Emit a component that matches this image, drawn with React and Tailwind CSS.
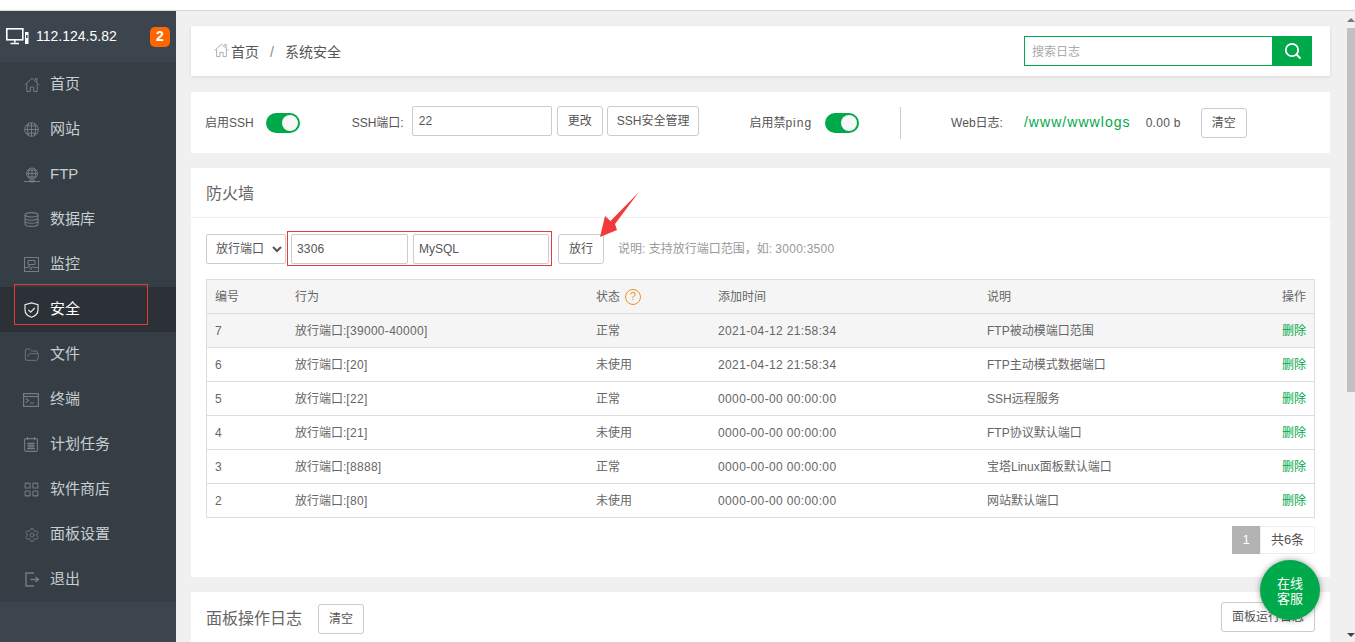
import { FolderOpen, LayoutGrid, Settings } from "lucide-react";

const font = { fontFamily: '"Liberation Sans", "Noto Sans CJK SC", sans-serif' };

const menu = [
  { name: "首页", icon: <HomeIcon size={16} /> },
  { name: "网站", icon: <GlobeIcon /> },
  { name: "FTP", icon: <FtpIcon /> },
  { name: "数据库", icon: <DbIcon /> },
  { name: "监控", icon: <MonitorIcon /> },
  { name: "安全", icon: <ShieldIcon />, active: true },
  { name: "文件", icon: <FolderOpen size={16} strokeWidth={1.3} /> },
  { name: "终端", icon: <TermIcon /> },
  { name: "计划任务", icon: <CalIcon /> },
  { name: "软件商店", icon: <LayoutGrid size={17} strokeWidth={1.5} className="-ml-[1px]" /> },
  { name: "面板设置", icon: <Settings size={16} strokeWidth={1.3} /> },
  { name: "退出", icon: <ExitIcon /> },
];

const rows = [
  { id: 7, port: "[39000-40000]", status: "正常", time: "2021-04-12 21:58:34", note: "FTP被动模端口范围", hover: true },
  { id: 6, port: "[20]", status: "未使用", time: "2021-04-12 21:58:34", note: "FTP主动模式数据端口" },
  { id: 5, port: "[22]", status: "正常", time: "0000-00-00 00:00:00", note: "SSH远程服务" },
  { id: 4, port: "[21]", status: "未使用", time: "0000-00-00 00:00:00", note: "FTP协议默认端口" },
  { id: 3, port: "[8888]", status: "正常", time: "0000-00-00 00:00:00", note: "宝塔Linux面板默认端口" },
  { id: 2, port: "[80]", status: "未使用", time: "0000-00-00 00:00:00", note: "网站默认端口" },
];

function HomeIcon({ size }) {
  return (
    <svg width={size} height={size} viewBox="0 0 16 16" fill="none" stroke="currentColor" strokeWidth="1">
      <path d="M0.7 8 8 1.2 15.3 8M2.8 6.5V14.5H6.3V10H9.7V14.5H13.2V6.5M11.5 3V1.5H13V5" />
    </svg>
  );
}

function GlobeIcon() {
  return (
    <svg width="15" height="15" viewBox="0 0 15 15" fill="none" stroke="currentColor" strokeWidth="1">
      <circle cx="7.5" cy="7.5" r="6.8" />
      <path d="M0.7 7.5h13.6M7.5 0.7v13.6M2 3.8h11M2 11.2h11M4.8 1.3c-1.8 4-1.8 8.400 0 12.400M10.200 1.300c1.800 4 1.800 8.400 0 12.400" />
    </svg>
  );
}

function FtpIcon() {
  return (
    <svg width="16" height="16" viewBox="0 0 16 16" fill="none" stroke="currentColor" strokeWidth="1">
      <circle cx="8" cy="6.5" r="5.5" />
      <path d="M2.500 6.500h11M8 1v11M4 3.200h8M4 9.800h8M5.500 2c-1.500 3-1.500 6 0 9M10.500 2c1.500 3 1.500 6 0 9M0 14.500h16M6 13h4v2H6z" />
    </svg>
  );
}

function DbIcon() {
  return (
    <svg width="15" height="15" viewBox="0 0 15 15" fill="none" stroke="currentColor" strokeWidth="1.1">
      <ellipse cx="7.500" cy="2.800" rx="6.500" ry="2.200" />
      <path d="M1 2.800v9.400c0 1.200 2.900 2.200 6.500 2.200s6.500-1 6.500-2.200V2.800M1 6c0 1.200 2.900 2.200 6.500 2.200S14 7.200 14 6M1 9.100c0 1.200 2.900 2.200 6.500 2.200s6.500-1 6.500-2.200" />
    </svg>
  );
}

function MonitorIcon() {
  return (
    <svg width="15" height="15" viewBox="0 0 15 15" fill="none" stroke="currentColor" strokeWidth="1">
      <rect x="0.500" y="0.500" width="14" height="14" />
      <path d="M4 3.500h7v4H4zM1 10.500h3l1.200-2 1.600 4 1.500-3 1 1h5" />
    </svg>
  );
}

function ShieldIcon() {
  return (
    <svg width="15" height="16" viewBox="0 0 15 16" fill="none" stroke="currentColor" strokeWidth="1.200">
      <path d="M7.500 0.800 14 2.600V8c0 3.500-2.800 6-6.500 7.300C3.800 14 1 11.500 1 8V2.600Z" />
      <path d="M4.300 7.800l2.400 2.400 4-4.200" />
    </svg>
  );
}

function TermIcon() {
  return (
    <svg width="16" height="14" viewBox="0 0 16 14" fill="none" stroke="currentColor" strokeWidth="1.200" className="-ml-[1px]">
      <rect x="0.600" y="0.600" width="14.800" height="12.800" />
      <path d="M1 3.500h14" />
      <path d="M3 5.500l2.500 2L3 9.500M7 10h4" />
    </svg>
  );
}

function CalIcon() {
  return (
    <svg width="14" height="15" viewBox="0 0 14 15" fill="none" stroke="currentColor" strokeWidth="1.100">
      <rect x="0.600" y="1.600" width="12.800" height="12.800" rx="1.500" />
      <path d="M3.500 0v3M10.500 0v3M3 6.500h8M3 9h8M3 11.500h8M5 5.500v7M7 5.500v7M9 5.500v7" />
    </svg>
  );
}

function ExitIcon() {
  return (
    <svg width="15" height="15" viewBox="0 0 15 15" fill="none" stroke="currentColor" strokeWidth="1.400" className="ml-[1px]">
      <path d="M9 1H1v13h8M5.500 7.500H12.500M10.500 5l3 2.500-3 2.500" />
    </svg>
  );
}

function SearchIcon() {
  return (
    <svg width="18" height="18" viewBox="0 0 18 18" fill="none" stroke="#fff" strokeWidth="1.800">
      <circle cx="8" cy="8" r="6.200" />
      <path d="M12.500 12.500 16.500 16.500" />
    </svg>
  );
}

function PcIcon() {
  return (
    <svg width="23" height="17" viewBox="0 0 23 17" fill="none">
      <rect x="0.800" y="0.800" width="16" height="11" stroke="#fff" strokeWidth="1.600" />
      <path d="M8.800 12v2.500M4.500 15.500h8.500" stroke="#fff" strokeWidth="1.600" />
      <rect x="19" y="4" width="3.500" height="12" fill="#fff" />
      <rect x="20" y="7" width="1.500" height="3" fill="#3c444d" />
    </svg>
  );
}

function Toggle() {
  return (
    <div className="flex h-[20px] w-[34px] items-center justify-end rounded-full bg-[#00a94a] pr-[2px]">
      <div className="h-[16px] w-[16px] rounded-full bg-[#f8f8f8]" />
    </div>
  );
}

function Btn({ children, className = "" }) {
  return (
    <button className={`h-[30px] shrink-0 rounded-[3px] border border-[#ccc] bg-white px-[10px] text-[12px] text-[#555] ${className}`}>
      {children}
    </button>
  );
}

export default function App() {
  return (
    <div style={font} className="relative flex h-[642px] w-[1355px] flex-col overflow-hidden bg-white">
      <div className="h-[11px] shrink-0 border-b border-[#d8d8d8] bg-white" />
      <div className="flex min-h-0 flex-1">
        {/* sidebar */}
        <aside className="flex w-[176px] shrink-0 flex-col bg-[#3c444d]">
          <div className="flex h-[51px] shrink-0 items-center px-[6px]">
            <PcIcon />
            <span className="ml-[7px] text-[14px] text-white">112.124.5.82</span>
            <span className="ml-auto flex h-[20px] w-[20px] items-center justify-center rounded-[5px] bg-[#ff6600] text-[14px] font-bold text-white">2</span>
          </div>
          <nav className="bg-[#353e45]">
            {menu.map((m) => (
              <div key={m.name} className={`relative flex h-[45px] items-center pl-[24px] ${m.active ? "bg-[#2c3138] text-white" : "text-[#c9cdd0]"}`}>
                <span className={`flex w-[26px] items-center ${m.active ? "text-[#e8e8e8]" : "text-[#767c82]"}`}>{m.icon}</span>
                <span className="text-[15px]">{m.name}</span>
                {m.active && <span className="absolute left-[14px] top-[-3px] h-[41px] w-[134px] border border-[#e33b3b]" />}
              </div>
            ))}
          </nav>
        </aside>

        {/* main */}
        <main className="flex min-w-0 flex-1 flex-col gap-[15px] overflow-hidden bg-[#f0f0f0] pl-[15px] pr-[17px] pt-[15px]">
          <section className="mb-[1px] flex h-[50px] shrink-0 items-center justify-between bg-white pl-[23px] pr-[18px] shadow-[0_1px_3px_rgba(0,0,0,0.1)]">
            <div className="flex items-center pt-[2px] text-[14px] text-[#555]">
              <span className="mb-[4px] text-[#aaa]"><HomeIcon size={15} /></span>
              <span className="ml-[2px]">首页</span>
              <span className="ml-[11px] mr-[11px] text-[#888]">/</span>
              <span>系统安全</span>
            </div>
            <div className="flex h-[30px] w-[288px]">
              <input readOnly placeholder="搜索日志" className="min-w-0 flex-1 border border-[#00a94a] px-[7px] pt-[2px] text-[12px] outline-none placeholder:text-[#aaa]" />
              <div className="flex w-[39px] items-center justify-center bg-[#00a94a]">
                <SearchIcon />
              </div>
            </div>
          </section>

          <section className="flex h-[61px] shrink-0 items-center bg-white pl-[14px] text-[12px] text-[#555]">
            <span>启用SSH</span>
            <span className="ml-[12px]"><Toggle /></span>
            <span className="ml-[52px]">SSH端口:</span>
            <input readOnly value="22" className="mb-[3px] ml-[8px] h-[30px] w-[140px] rounded-[2px] border border-[#ccc] px-[6px] text-[12px] text-[#555] outline-none" />
            <Btn className="mb-[3px] ml-[5px]">更改</Btn>
            <Btn className="mb-[3px] ml-[4px] !px-[9px]">SSH安全管理</Btn>
            <span className="ml-[50px]">启用禁<span className="tracking-[1px]">ping</span></span>
            <span className="ml-[13px]"><Toggle /></span>
            <span className="ml-[41px] h-[32px] w-px bg-[#ccc]" />
            <span className="ml-[50px]">Web日志:</span>
            <span className="ml-[21px] text-[14px] font-light tracking-[1.05px] text-[#00a94a]">/www/wwwlogs</span>
            <span className="ml-[15px] tracking-[0.3px]">0.00 b</span>
            <Btn className="ml-[20px]">清空</Btn>
          </section>

          <section className="flex h-[409px] shrink-0 flex-col bg-white">
            <div className="flex h-[50px] shrink-0 items-center border-b border-[#eee] px-[15px] pt-[3px] text-[16px] text-[#666]">防火墙</div>
            <div className="flex items-center px-[15px] pt-[13px] text-[12px] text-[#555]">
              <select className="h-[30px] w-[80px] rounded-[2px] border border-[#ccc] bg-white pl-[5px] text-[12px] text-[#555] outline-none">
                <option>放行端口</option>
              </select>
              <div className="ml-[1px] flex h-[35px] w-[265px] items-center gap-[5px] border border-[#e33b3b] pl-[3px]">
                <input readOnly value="3306" className="h-[30px] w-[117px] rounded-[2px] border border-[#ccc] px-[5px] text-[12px] tracking-[0.2px] text-[#555] outline-none" />
                <input readOnly value="MySQL" className="h-[30px] w-[136px] rounded-[2px] border border-[#ccc] px-[5px] text-[12px] text-[#555] outline-none" />
              </div>
              <Btn className="ml-[6px]">放行</Btn>
              <span className="ml-[14px] text-[#999]">说明: 支持放行端口范围，如: <span className="tracking-[0.25px]">3000:3500</span></span>
            </div>
            <div className="mx-[15px] mt-[13px] border border-[#ddd] text-[12px] text-[#666]">
              <div className="flex h-[33px] items-center bg-[#f5f5f5] px-[8px]">
                <span className="w-[80px]">编号</span>
                <span className="w-[301px]">行为</span>
                <span className="flex w-[122px] items-center gap-[5px]">
                  状态
                  <span className="flex h-[16px] w-[16px] items-center justify-center rounded-full border border-[#f0912c] text-[11px] text-[#f0912c]">?</span>
                </span>
                <span className="w-[269px]">添加时间</span>
                <span className="flex-1">说明</span>
                <span>操作</span>
              </div>
              {rows.map((r) => (
                <div key={r.id} className={`flex h-[34px] items-center border-t border-[#ddd] px-[8px] ${r.hover ? "bg-[#f5f5f5]" : ""}`}>
                  <span className="w-[80px]">{r.id}</span>
                  <span className="w-[301px]">放行端口:<span className="tracking-[0.3px]">{r.port}</span></span>
                  <span className="w-[122px]">{r.status}</span>
                  <span className="w-[269px] tracking-[0.37px]">{r.time}</span>
                  <span className="flex-1">{r.note}</span>
                  <span className="text-[#00a94a]">删除</span>
                </div>
              ))}
            </div>
            <div className="mx-[15px] mt-[8px] flex justify-end text-[13px]">
              <span className="flex h-[28px] w-[28px] items-center justify-center bg-[#b3b3b3] text-white">1</span>
              <span className="flex h-[28px] w-[55px] items-center justify-center border border-[#eee] text-[#555]">共6条</span>
            </div>
          </section>

          <section className="flex h-[60px] shrink-0 items-start justify-between bg-white px-[15px] pt-[10px]">
            <div className="mt-[2px] flex items-center text-[#666]">
              <span className="text-[16px]">面板操作日志</span>
              <Btn className="ml-[16px]">清空</Btn>
            </div>
            <Btn>面板运行日志</Btn>
          </section>
        </main>

        {/* scrollbar */}
        <div className="flex w-[8px] shrink-0 flex-col items-center bg-[#f0f0f0]">
          <div className="mt-[7px] h-0 w-0 border-x-[4px] border-b-[4px] border-x-transparent border-b-[#777]" />
          <div className="mt-[6px] h-[364px] w-full shrink-0 bg-[#c1c1c1]" />
          <div className="mb-[5px] mt-auto h-0 w-0 border-x-[4px] border-t-[4px] border-x-transparent border-t-[#444]" />
        </div>
      </div>

      <div className="absolute left-[1260px] top-[560px] flex h-[60px] w-[60px] items-center justify-center rounded-full bg-[#00a94a] pt-[2px] text-center text-[13px] leading-[15px] text-white shadow-[0_0_6px_rgba(0,0,0,0.4)]">
        在线<br />客服
      </div>
      <svg className="absolute left-[598px] top-[190px]" width="44" height="50" viewBox="0 0 44 50">
        <path d="M41 2 L17 34 L19 40 L2 47 L7 26 L12.500 31 Z" fill="#f23a3a" />
      </svg>
    </div>
  );
}
